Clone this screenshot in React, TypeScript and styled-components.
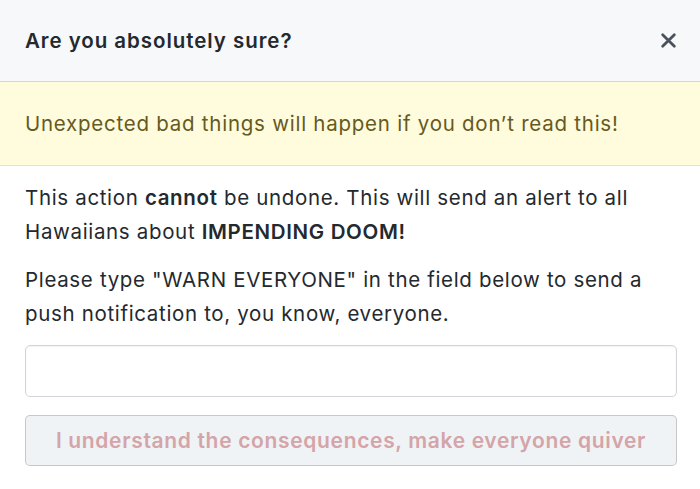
import React, { useState } from 'react';
import styled, { createGlobalStyle } from 'styled-components';

const GlobalStyle = createGlobalStyle`
  html, body {
    margin: 0;
    padding: 0;
    background: #ffffff;
  }

  body {
    font-family: Inter, "Liberation Sans", Arial, sans-serif;
    color: #24292e;
  }
`;

const CloseIcon: React.FC = () => (
  <svg width="17" height="17" viewBox="0 0 16 16" aria-hidden="true">
    <path
      d="M2.5 2.5 L13.5 13.5 M13.5 2.5 L2.5 13.5"
      stroke="#4a525b"
      strokeWidth="2.6"
      strokeLinecap="round"
    />
  </svg>
);

const App: React.FC = () => {
  const [value, setValue] = useState('');
  const confirmed = value === 'WARN EVERYONE';

  return (
    <>
      <GlobalStyle />
      <Dialog>
        <Header>
          <Title>Are you absolutely sure?</Title>
          <CloseButton type="button" aria-label="Close dialog">
            <CloseIcon />
          </CloseButton>
        </Header>

        <Flash>Unexpected bad things will happen if you don’t read this!</Flash>

        <Body>
          <Paragraph>
            This action <strong>cannot</strong> be undone. This will send an alert to all
            Hawaiians about <strong>IMPENDING DOOM!</strong>
          </Paragraph>
          <Paragraph>
            Please type "WARN EVERYONE" in the field below to send a push notification to,
            you know, everyone.
          </Paragraph>

          <Form onSubmit={(e) => e.preventDefault()}>
            <Input
              type="text"
              value={value}
              onChange={(e) => setValue(e.target.value)}
              aria-label="Type WARN EVERYONE to confirm"
            />
            <DangerButton type="submit" disabled={!confirmed}>
              I understand the consequences, make everyone quiver
            </DangerButton>
          </Form>
        </Body>
      </Dialog>
    </>
  );
};

const Dialog = styled.div`
  width: 700px;
  min-height: 489px;
  background: #ffffff;
`;

const Header = styled.div`
  display: flex;
  align-items: center;
  justify-content: space-between;
  height: 82px;
  padding: 0 23px 0 25px;
  box-sizing: border-box;
  background: #f6f8fa;
  border-bottom: 1px solid #d3d6da;
`;

const Title = styled.h3`
  margin: 0;
  font-size: 20.5px;
  font-weight: 600;
  letter-spacing: 0.95px;
  color: #24292e;
`;

const CloseButton = styled.button`
  display: flex;
  align-items: center;
  justify-content: center;
  padding: 0;
  border: none;
  background: none;
  cursor: pointer;
`;

const Flash = styled.div`
  display: flex;
  align-items: center;
  height: 84px;
  padding: 0 25px;
  box-sizing: border-box;
  background: #fffbdd;
  border-bottom: 1px solid #e8e3c8;
  color: #665a1e;
  font-size: 20.5px;
  letter-spacing: 0.75px;
`;

const Body = styled.div`
  padding: 15px 23px 0 25px;
`;

const Paragraph = styled.p`
  margin: 0 0 14px;
  font-size: 20.5px;
  line-height: 34px;
  letter-spacing: 0.66px;
  color: #24292e;

  strong {
    font-weight: 600;
  }
`;

const Form = styled.form`
  display: flex;
  flex-direction: column;
  gap: 18px;
`;

const Input = styled.input`
  height: 52px;
  padding: 0 12px;
  box-sizing: border-box;
  border: 1px solid #d1d5da;
  border-radius: 5px;
  font-family: inherit;
  font-size: 20px;
  color: #24292e;
  box-shadow: inset 0 1px 2px rgba(27, 31, 35, 0.06);
  outline: none;
`;

const DangerButton = styled.button`
  height: 51px;
  box-sizing: border-box;
  border: 1px solid rgba(27, 31, 35, 0.2);
  border-radius: 5px;
  background: #eff3f6;
  color: #cb2431;
  font-family: inherit;
  font-size: 21px;
  font-weight: 600;
  letter-spacing: 0.66px;
  cursor: pointer;

  &:disabled {
    color: #d4a4a8;
    cursor: default;
  }
`;

export default App;
